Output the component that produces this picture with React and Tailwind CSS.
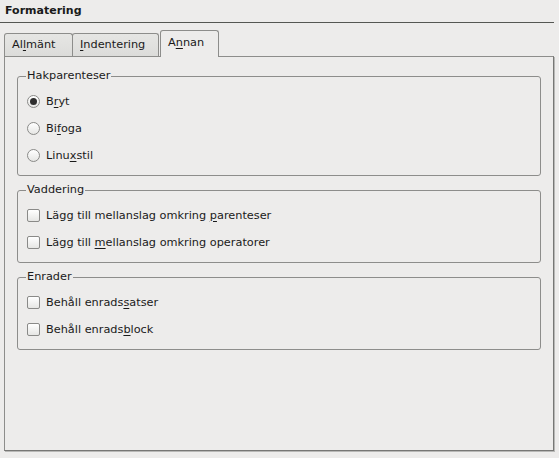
import React from "react";

function U({ children }) {
  return <span className="underline underline-offset-[2px] decoration-[1px]">{children}</span>;
}

function Radio({ checked, children }) {
  return (
    <div className="h-[27px] flex items-center">
      <span className="w-[13px] h-[13px] rounded-full border border-[#8a8a88] bg-gradient-to-b from-[#ffffff] to-[#e6e6e4] flex items-center justify-center shrink-0">
        {checked && <span className="w-[7px] h-[7px] rounded-full bg-[#2e2e2e]" />}
      </span>
      <span className="ml-[6px]">{children}</span>
    </div>
  );
}

function Check({ children }) {
  return (
    <div className="h-[27px] flex items-center">
      <span className="w-[13px] h-[13px] rounded-[2px] border border-[#8a8a88] bg-gradient-to-b from-[#ffffff] to-[#e6e6e4] shrink-0" />
      <span className="ml-[6px]">{children}</span>
    </div>
  );
}

function Group({ title, children, className = "" }) {
  return (
    <fieldset className={"mx-[12px] border border-[#8d8d8b] rounded-[3px] pl-[9px] pt-[5px] pb-[6px] " + className}>
      <legend className="-ml-[1px] px-[1px] leading-[14px]">{title}</legend>
      {children}
    </fieldset>
  );
}

export default function App() {
  return (
    <div className="w-[559px] h-[458px] bg-[#edeceb] text-[#1a1a1a] font-['DejaVu_Sans',sans-serif] text-[11.3px] leading-[14px] overflow-hidden">
      <div className="pl-[5px] pt-[4px] h-[22px] font-bold text-[11px]">Formatering</div>
      <div className="h-px bg-[#555753] w-[554px]" />
      <div className="pt-[7px] pl-[4px]">
        <div className="flex items-end h-[26px]">
          <div className="w-[69px] h-[23px] border border-b-0 border-[#8d8d8b] rounded-t-[3px] bg-gradient-to-b from-[#e6e6e4] to-[#dcdcda] pl-[7px] pt-[4px]">
            Al<U>l</U>mänt
          </div>
          <div className="-ml-px w-[87px] h-[23px] border border-b-0 border-[#8d8d8b] rounded-t-[3px] bg-gradient-to-b from-[#e6e6e4] to-[#dcdcda] pl-[7px] pt-[4px]">
            <U>I</U>ndentering
          </div>
          <div className="relative z-10 ml-[1px] -mb-px w-[59px] h-[27px] border border-b-0 border-[#8d8d8b] rounded-t-[3px] bg-[#edeceb] pl-[7px] pt-[5px]">
            A<U>n</U>nan
          </div>
        </div>
        <div className="w-[550px] h-[395px] border border-[#8d8d8b] border-r-[#777775] border-b-[#777775] shadow-[1px_1px_0_#b8b8b6] pt-[12px]">
          <Group title="Hakparenteser">
            <Radio checked>B<U>r</U>yt</Radio>
            <Radio>Bi<U>f</U>oga</Radio>
            <Radio>Linu<U>x</U>stil</Radio>
          </Group>
          <Group title="Vaddering" className="mt-[7px]">
            <Check>Lägg till mellanslag omkring <U>p</U>arenteser</Check>
            <Check>Lägg till <U>m</U>ellanslag omkring operatorer</Check>
          </Group>
          <Group title="Enrader" className="mt-[7px]">
            <Check>Behåll enrads<U>s</U>atser</Check>
            <Check>Behåll enrads<U>b</U>lock</Check>
          </Group>
        </div>
      </div>
    </div>
  );
}
